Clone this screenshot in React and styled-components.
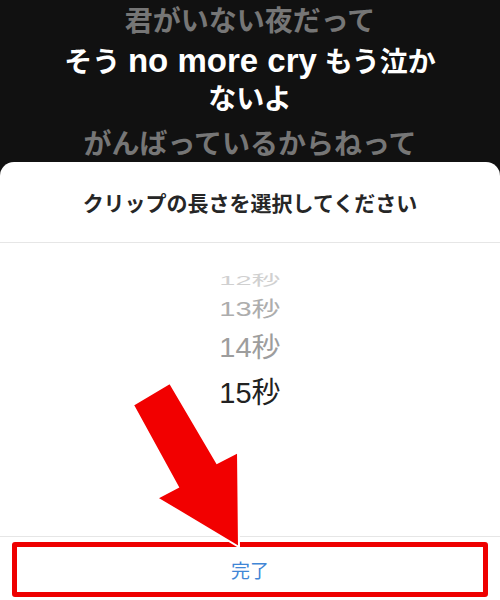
import React from "react";
import styled, { createGlobalStyle } from "styled-components";

const GlobalStyle = createGlobalStyle`
    html, body {
        margin: 0;
        padding: 0;
        background: #111;
    }
    body {
        font-family: "Liberation Sans", "Noto Sans CJK JP", sans-serif;
    }
`;

const Screen = styled.div`
    position: relative;
    width: 500px;
    height: 600px;
    display: flex;
    flex-direction: column;
    overflow: hidden;
    background: #111;
`;

const Lyrics = styled.section`
    height: 162px;
    flex: 0 0 162px;
    overflow: hidden;
    padding: 3px 52px 0;
    box-sizing: border-box;
    text-align: center;
`;

const Line = styled.p`
    margin: ${(p) => p.$space || 0}px 0 0;
    font-size: 28px;
    line-height: 37px;
    font-weight: 700;
    color: ${(p) => (p.$active ? "#ffffff" : "#767676")};
`;

const Latin = styled.span`
    font-size: 33px;
    line-height: 1;
`;

const Sheet = styled.section`
    flex: 1;
    display: flex;
    flex-direction: column;
    background: #fff;
    border-radius: 14px 14px 0 0;
`;

const Title = styled.h2`
    margin: 0;
    height: 80px;
    display: flex;
    align-items: center;
    justify-content: center;
    font-size: 21px;
    font-weight: 700;
    color: #262626;
    border-bottom: 1px solid #e6e6e6;
`;

const Wheel = styled.div`
    flex: 1;
    display: flex;
    flex-direction: column;
    align-items: center;
    padding-top: 27px;
    border-bottom: 1px solid #e6e6e6;
`;

const Option = styled.div`
    height: ${(p) => p.$h}px;
    display: flex;
    align-items: center;
    justify-content: center;
    overflow: hidden;
    font-size: 29px;
    color: ${(p) => p.$color};
    span {
        display: inline-block;
        transform: scaleY(${(p) => p.$scale});
    }
`;

const Footer = styled.div`
    height: 63px;
    padding: 5px 12px 3px;
    box-sizing: border-box;
`;

const DoneButton = styled.button`
    width: 100%;
    height: 100%;
    border: 5px solid #ee0000;
    border-radius: 3px;
    background: #fff;
    color: #3f86d6;
    font-family: "Liberation Sans", "Noto Sans CJK JP", sans-serif;
    font-size: 19px;
    padding: 0;
`;

const Overlay = styled.svg`
    position: absolute;
    left: 0;
    top: 0;
    pointer-events: none;
`;

const options = [
    { label: "12秒", h: 18, scale: 0.47, color: "#d0d0d0" },
    { label: "13秒", h: 38, scale: 0.72, color: "#adadad" },
    { label: "14秒", h: 38, scale: 0.93, color: "#9d9d9d" },
    { label: "15秒", h: 52, scale: 1, color: "#222" },
];

const App = () => {
    return (
        <>
            <GlobalStyle />
            <Screen>
                <Lyrics>
                    <Line>君がいない夜だって</Line>
                    <Line $active $space={4}>
                        そう <Latin>no more cry</Latin> もう泣かないよ
                    </Line>
                    <Line $space={8}>がんばっているからねって</Line>
                </Lyrics>
                <Sheet>
                    <Title>クリップの長さを選択してください</Title>
                    <Wheel>
                        {options.map((o) => (
                            <Option key={o.label} $h={o.h} $scale={o.scale} $color={o.color}>
                                <span>{o.label}</span>
                            </Option>
                        ))}
                    </Wheel>
                    <Footer>
                        <DoneButton>完了</DoneButton>
                    </Footer>
                </Sheet>
                <Overlay width="500" height="600" viewBox="0 0 500 600">
                    <polygon
                        points="133,405 170,383 217,463 238,452 239,547 157,498 178,487"
                        fill="#f20000"
                        stroke="#fff"
                        strokeWidth="2"
                        strokeLinejoin="miter"
                    />
                </Overlay>
            </Screen>
        </>
    );
};

export default App;
